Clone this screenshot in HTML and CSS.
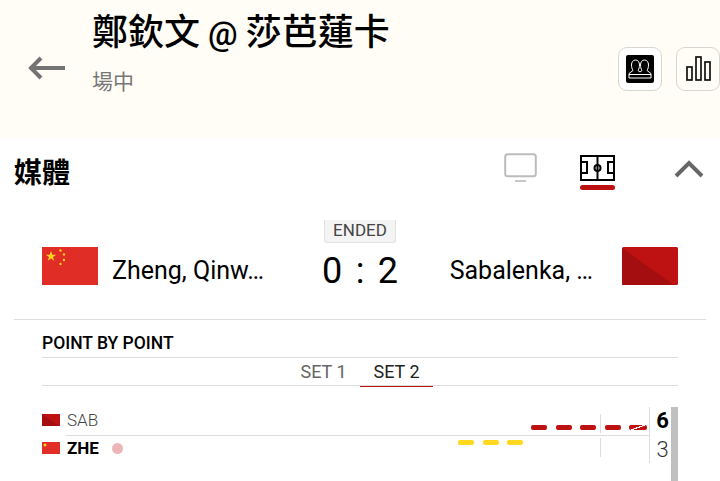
FILE: index.html
```html
<!DOCTYPE html>
<html lang="zh-Hant">
<head>
<meta charset="utf-8">
<title>鄭欽文 @ 莎芭蓮卡</title>
<link rel="stylesheet" href="styles.css">
</head>
<body>
<header class="top">
  <svg class="back" width="38" height="24" viewBox="0 0 38 24"><path d="M37 12H3M13 2 3 12l10 10" fill="none" stroke="#737373" stroke-width="4"/></svg>
  <div class="heading">
    <h1>鄭欽文 <span class="at">@</span> 莎芭蓮卡</h1>
    <p>場中</p>
  </div>
  <div class="actions">
    <button class="act"><svg width="28" height="28" viewBox="0 0 28 28"><rect width="28" height="28" rx="2" fill="#000"/><g fill="none" stroke="#fff" stroke-width="1"><path d="M3 23V18.500L7 15.500C6 14 5.500 12 5.500 10C5.500 7 7 5 9.500 5S13.500 7 13.500 10C13.500 12 13 14 12 15.500L14 17"/><path d="M25 23V18.500L21 15.500C22 14 22.500 12 22.500 10C22.500 7 21 5 18.500 5S14.500 7 14.500 10C14.500 12 15 14 16 15.500L14 17"/><path d="M3 19.500H25M3 23H25"/></g></svg></button>
    <button class="act"><svg width="26" height="28" viewBox="0 0 26 28"><g fill="none" stroke="#111" stroke-width="1.700"><rect x="2" y="12" width="5" height="13"/><rect x="11" y="2" width="5" height="23"/><rect x="20" y="7" width="5" height="18"/></g></svg></button>
  </div>
</header>
<section class="media">
  <h2>媒體</h2>
  <svg class="tv" width="34" height="30" viewBox="0 0 34 30"><rect x="1.200" y="1.200" width="30.600" height="22" rx="2.500" fill="none" stroke="#bcbcbc" stroke-width="2"/><path d="M11 28h11" stroke="#c8c8c8" stroke-width="2"/></svg>
  <div class="pitch-tab">
    <svg width="35" height="26" viewBox="0 0 35 26"><g fill="none" stroke="#000" stroke-width="2"><rect x="1" y="1" width="33" height="24"/><path d="M17.500 1v24"/><rect x="1" y="7" width="6" height="11"/><rect x="28" y="7" width="6" height="11"/><circle cx="17.500" cy="13" r="3"/></g></svg>
    <span class="tab-mark"></span>
  </div>
  <svg class="chev" width="30" height="18" viewBox="0 0 30 18"><path d="M2 16 15 3l13 13" fill="none" stroke="#666" stroke-width="4"/></svg>
</section>
<section class="match">
  <div class="status"><span class="ended">ENDED</span></div>
  <div class="scoreline">
    <div class="side">
      <svg class="flag" width="56" height="38" viewBox="0 0 56 38"><rect width="56" height="38" fill="#e02d26"/><polygon points="9,4 10.300,7.700 14.200,7.700 11,10 12.200,13.800 9,11.500 5.800,13.800 7,10 3.800,7.700 7.700,7.700" fill="#ffd21f"/><g fill="#ffd21f"><circle cx="18.500" cy="3.500" r="1.200"/><circle cx="22" cy="7.500" r="1.200"/><circle cx="22" cy="13" r="1.200"/><circle cx="18.500" cy="17" r="1.200"/></g></svg>
      <span class="name">Zheng, Qinw…</span>
    </div>
    <div class="score"><span>0</span><span>:</span><span>2</span></div>
    <div class="side side-right">
      <span class="name">Sabalenka, …</span>
      <svg class="flag" width="56" height="38" viewBox="0 0 56 38"><rect width="56" height="38" rx="1.500" fill="#bd1112"/><path d="M0 1 52 38H1.500Q0 38 0 36.500Z" fill="#a50e10"/></svg>
    </div>
  </div>
</section>
<section class="pbp">
  <h3>POINT BY POINT</h3>
  <nav class="sets"><span class="set">SET 1</span><span class="set set-on">SET 2</span></nav>
  <div class="rows">
    <div class="labels">
      <div class="label">
        <svg width="18" height="12" viewBox="0 0 18 12"><rect width="18" height="12" fill="#bd1112"/><path d="M0 0 17 12H0Z" fill="#a50e10"/></svg>
        <span class="abbr">SAB</span>
      </div>
      <div class="label label-win">
        <svg width="18" height="12" viewBox="0 0 18 12"><rect width="18" height="12" fill="#e02d26"/><circle cx="3" cy="3" r="1.500" fill="#ffd21f"/></svg>
        <span class="abbr">ZHE</span>
        <i class="serve"></i>
      </div>
    </div>
    <div class="chart">
      <div class="track track-top">
        <i class="dash red"></i><i class="dash red"></i><i class="dash red"></i><i class="dash red"></i><i class="dash red last"></i>
      </div>
      <div class="track track-bottom">
        <i class="dash yellow"></i><i class="dash yellow"></i><i class="dash yellow"></i>
      </div>
      <i class="tick tick-a"></i>
      <i class="tick tick-b"></i>
    </div>
    <div class="games"><b>6</b><span>3</span></div>
    <div class="bar"></div>
  </div>
</section>
</body>
</html>
```
FILE: styles.css
```css
* { box-sizing: border-box; }
html, body { margin: 0; }
body {
  width: 720px;
  height: 481px;
  overflow: hidden;
  background: #fff;
  color: #000;
  font-family: Roboto, "Noto Sans CJK TC", sans-serif;
}
h1, h2, h3, p { margin: 0; }
.top {
  height: 138px;
  background: #fffdf6;
  display: flex;
  align-items: flex-start;
  padding-left: 28px;
}
.back { margin-top: 56px; flex: none; }
.heading { margin-left: 27px; flex: 1; }
.heading h1 {
  font: 500 36px/44px "Noto Sans CJK TC", sans-serif;
  height: 44px;
  margin: 7px 0 0 -1px;
  white-space: nowrap;
}
.at { font: 500 33px/1 Roboto, sans-serif; }
.heading p {
  font-size: 21px;
  line-height: 28px;
  color: #777;
  margin: 17px 0 0 -1px;
}
.actions { display: flex; gap: 14px; margin-top: 47px; }
.act {
  width: 44px;
  height: 44px;
  padding: 0;
  border: 1px solid #d8d6d0;
  border-radius: 9px;
  background: #fff;
  display: flex;
  align-items: center;
  justify-content: center;
}
.act + .act { background: #fffdf6; }
.media {
  height: 82px;
  display: flex;
  align-items: flex-start;
  padding: 0 14px;
}
.media h2 {
  font: 700 28px/40px "Noto Sans CJK TC", sans-serif;
  margin-top: 13px;
  flex: 1;
}
.tv { margin-top: 15px; }
.pitch-tab { margin: 17px 0 0 42px; width: 35px; display: flex; flex-direction: column; }
.tab-mark { height: 5px; border-radius: 3px; background: #bd1112; margin-top: 4px; }
.chev { margin: 22px 2px 0 59px; }
.match { height: 100px; margin: 0 14px; padding: 0 28px; border-bottom: 1px solid #ddd; }
.status { display: flex; justify-content: center; }
.ended {
  width: 72px;
  height: 23px;
  background: #f4f4f4;
  border: 1px solid #e2e2e2;
  border-top: 0;
  border-radius: 0 0 3px 3px;
  color: #444;
  font-size: 17px;
  line-height: 20px;
  text-align: center;
}
.scoreline { display: grid; grid-template-columns: 1fr 76px 1fr; column-gap: 54px; margin-top: 4px; }
.side { display: flex; align-items: flex-start; gap: 14px; min-width: 0; }
.side-right { justify-content: flex-end; gap: 29px; }
.flag { flex: none; }
.name { font-size: 25px; font-weight: 400; line-height: 48px; white-space: nowrap; }
.score {
  display: flex;
  justify-content: space-between;
  font-size: 36px;
  line-height: 48px;
  font-weight: 400;
}
.pbp { padding: 11px 42px 0; }
.pbp h3 {
  font-size: 17.500px;
  line-height: 24px;
  font-weight: 500;
  height: 27px;
  border-bottom: 1px solid #ddd;
}
.sets {
  display: flex;
  justify-content: center;
  height: 28px;
  border-bottom: 1px solid #ddd;
}
.set {
  width: 73px;
  text-align: center;
  font-size: 18px;
  line-height: 27px;
  color: #666;
  height: 29px;
}
.set-on { color: #222; border-bottom: 1px solid #bd1112; }
.rows { display: flex; margin-top: 21px; height: 74px; }
.labels { width: 608px; flex: none; position: relative; margin-top: -1px; }
.labels::after { content: ""; position: absolute; left: 24px; right: 0; top: 29px; height: 1px; background: #ddd; }
.label { display: flex; align-items: center; height: 28px; }
.label svg { flex: none; }
.abbr { font-size: 17px; margin-left: 7px; color: #444; font-weight: 300; }
.label-win { height: 28px; }
.label-win .abbr { font-weight: 700; color: #000; }
.serve { width: 11px; height: 11px; border-radius: 50%; background: #ecb6b9; margin-left: 13px; }
.chart { width: 0; position: relative; }
.track { position: absolute; display: flex; gap: 8.500px; }
.track-top { right: 3px; top: 18px; }
.track-bottom { right: 127px; top: 33px; }
.dash { width: 16px; height: 4.500px; border-radius: 2px; display: block; }
.red { background: #bd1112; }
.red.last { width: 18px; background: linear-gradient(160deg, #bd1112 44%, #fff 45%, #fff 55%, #bd1112 56%); }
.yellow { background: #ffd81f; }
.tick { position: absolute; width: 1px; background: #ddd; }
.tick-a { left: -50px; top: 7px; height: 43px; background: linear-gradient(#ddd 19px, transparent 19px, transparent 24px, #ddd 24px); }
.tick-b { left: -1px; top: 0; height: 56px; }
.games { width: 21px; flex: none; display: flex; flex-direction: column; align-items: center; font-size: 22px; line-height: 29px; color: #333; font-weight: 300; margin-top: -1px; padding-left: 4px; }
.games b { color: #000; font-weight: 700; }
.bar { width: 7px; flex: none; background: #c0c0c0; }
```
